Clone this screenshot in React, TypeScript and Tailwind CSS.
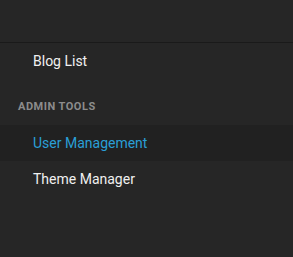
import React from "react";

export default function App() {
  return (
    <div className="w-[293px] h-[257px] bg-[#262626] font-['Roboto',sans-serif] flex flex-col">
      <div className="h-[43px] border-b border-[#1a1a1a] shrink-0" />
      <div className="h-[36px] flex items-center pl-[33px] text-[14px] text-[#f0f0f0]">Blog List</div>
      <div className="h-[46px] flex items-center pl-[18px] pt-[10px] text-[11px] font-bold tracking-[0.5px] text-[#8c8c8c]">ADMIN TOOLS</div>
      <div className="h-[36px] flex items-center pl-[33px] text-[14px] text-[#2a9fd6] bg-[#212121]">User Management</div>
      <div className="h-[36px] flex items-center pl-[33px] text-[14px] text-[#f0f0f0]">Theme Manager</div>
    </div>
  );
}
